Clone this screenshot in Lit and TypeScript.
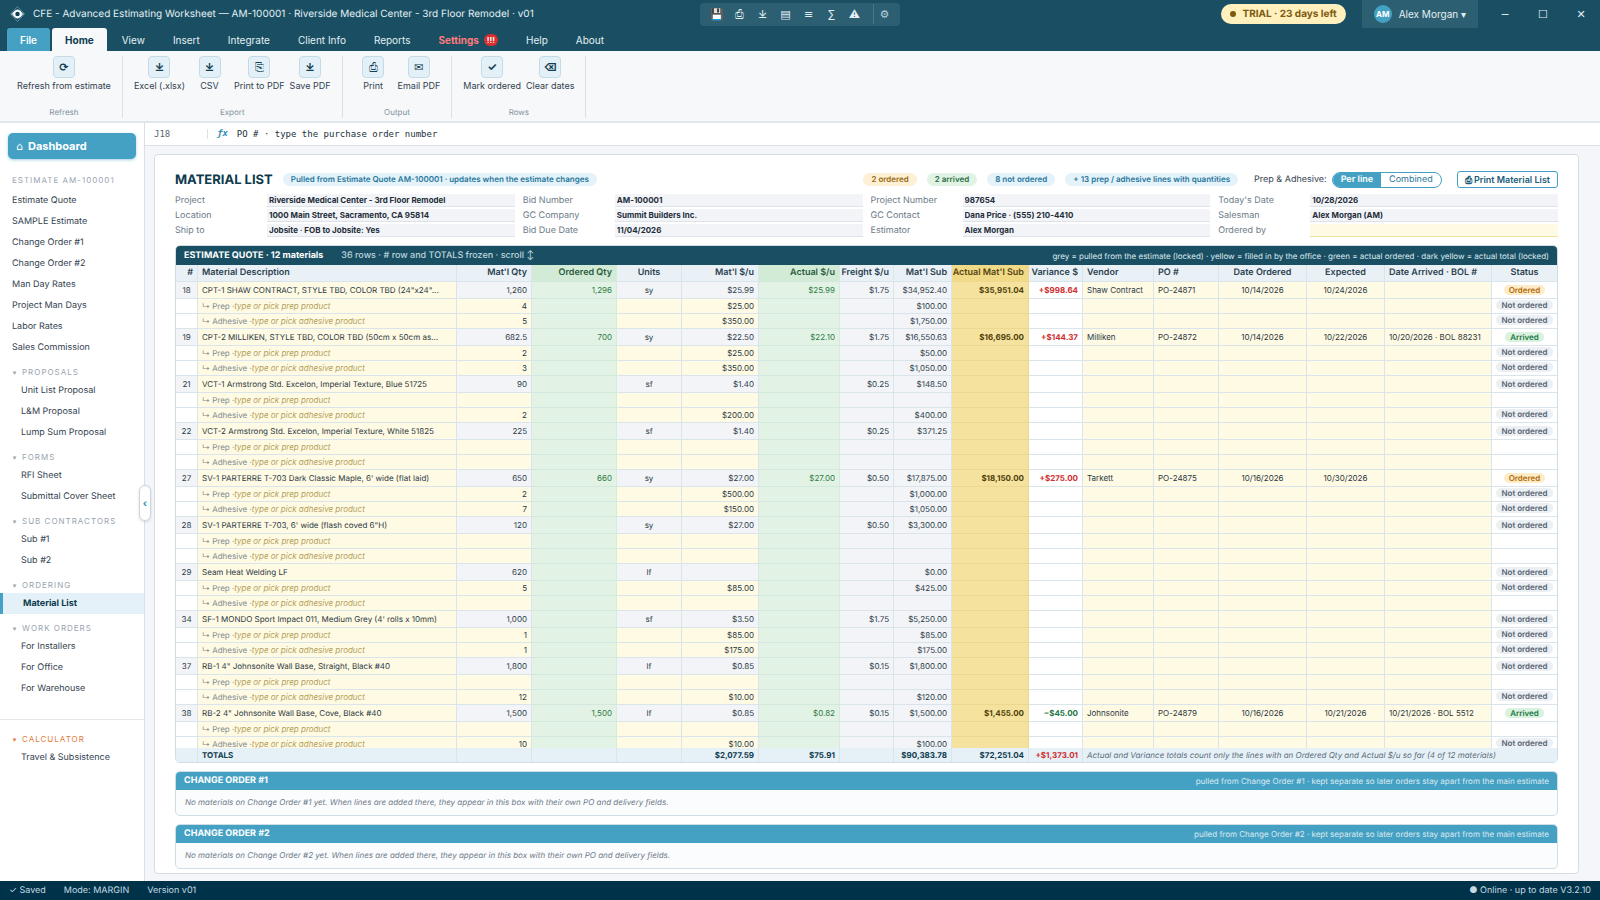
import { LitElement, html, css, nothing } from "lit";
import { customElement, state } from "lit/decorators.js";
import { classMap } from "lit/directives/class-map.js";

type Sub = { qty?: string; price?: string; total?: string };
type Material = {
  no: number;
  name: string;
  qty: string;
  unit: string;
  price?: string;
  freight?: string;
  total: string;
  ordered?: string;
  actual?: string;
  actualSub?: string;
  variance?: string;
  vendor?: string;
  po?: string;
  dateOrdered?: string;
  expected?: string;
  arrived?: string;
  status?: string;
  prep: Sub;
  adhesive: Sub;
};

const MATERIALS: Material[] = [
  { no: 18, name: 'CPT-1 SHAW CONTRACT, STYLE TBD, COLOR TBD (24"x24"...', qty: "1,260", unit: "sy", price: "$25.99", freight: "$1.75", total: "$34,952.40", ordered: "1,296", actual: "$25.99", actualSub: "$35,951.04", variance: "+$998.64", vendor: "Shaw Contract", po: "PO-24871", dateOrdered: "10/14/2026", expected: "10/24/2026", status: "Ordered", prep: { qty: "4", price: "$25.00", total: "$100.00" }, adhesive: { qty: "5", price: "$350.00", total: "$1,750.00" } },
  { no: 19, name: "CPT-2 MILLIKEN, STYLE TBD, COLOR TBD (50cm x 50cm as...", qty: "682.5", unit: "sy", price: "$22.50", freight: "$1.75", total: "$16,550.63", ordered: "700", actual: "$22.10", actualSub: "$16,695.00", variance: "+$144.37", vendor: "Milliken", po: "PO-24872", dateOrdered: "10/14/2026", expected: "10/22/2026", arrived: "10/20/2026 · BOL 88231", status: "Arrived", prep: { qty: "2", price: "$25.00", total: "$50.00" }, adhesive: { qty: "3", price: "$350.00", total: "$1,050.00" } },
  { no: 21, name: "VCT-1 Armstrong Std. Excelon, Imperial Texture, Blue 51725", qty: "90", unit: "sf", price: "$1.40", freight: "$0.25", total: "$148.50", prep: {}, adhesive: { qty: "2", price: "$200.00", total: "$400.00" } },
  { no: 22, name: "VCT-2 Armstrong Std. Excelon, Imperial Texture, White 51825", qty: "225", unit: "sf", price: "$1.40", freight: "$0.25", total: "$371.25", prep: {}, adhesive: {} },
  { no: 27, name: "SV-1 PARTERRE T-703 Dark Classic Maple, 6' wide (flat laid)", qty: "650", unit: "sy", price: "$27.00", freight: "$0.50", total: "$17,875.00", ordered: "660", actual: "$27.00", actualSub: "$18,150.00", variance: "+$275.00", vendor: "Tarkett", po: "PO-24875", dateOrdered: "10/16/2026", expected: "10/30/2026", status: "Ordered", prep: { qty: "2", price: "$500.00", total: "$1,000.00" }, adhesive: { qty: "7", price: "$150.00", total: "$1,050.00" } },
  { no: 28, name: "SV-1 PARTERRE T-703, 6' wide (flash coved 6\"H)", qty: "120", unit: "sy", price: "$27.00", freight: "$0.50", total: "$3,300.00", prep: {}, adhesive: {} },
  { no: 29, name: "Seam Heat Welding LF", qty: "620", unit: "lf", total: "$0.00", prep: { qty: "5", price: "$85.00", total: "$425.00" }, adhesive: {} },
  { no: 34, name: "SF-1 MONDO Sport Impact 011, Medium Grey (4' rolls x 10mm)", qty: "1,000", unit: "sf", price: "$3.50", freight: "$1.75", total: "$5,250.00", prep: { qty: "1", price: "$85.00", total: "$85.00" }, adhesive: { qty: "1", price: "$175.00", total: "$175.00" } },
  { no: 37, name: 'RB-1 4" Johnsonite Wall Base, Straight, Black #40', qty: "1,800", unit: "lf", price: "$0.85", freight: "$0.15", total: "$1,800.00", prep: {}, adhesive: { qty: "12", price: "$10.00", total: "$120.00" } },
  { no: 38, name: 'RB-2 4" Johnsonite Wall Base, Cove, Black #40', qty: "1,500", unit: "lf", price: "$0.85", freight: "$0.15", total: "$1,500.00", ordered: "1,500", actual: "$0.82", actualSub: "$1,455.00", variance: "−$45.00", vendor: "Johnsonite", po: "PO-24879", dateOrdered: "10/16/2026", expected: "10/21/2026", arrived: "10/21/2026 · BOL 5512", status: "Arrived", prep: {}, adhesive: { qty: "10", price: "$10.00", total: "$100.00" } },
];

const META: [string, string][] = [
  ["Project", "Riverside Medical Center - 3rd Floor Remodel"],
  ["Bid Number", "AM-100001"],
  ["Project Number", "987654"],
  ["Today's Date", "10/28/2026"],
  ["Location", "1000 Main Street, Sacramento, CA 95814"],
  ["GC Company", "Summit Builders Inc."],
  ["GC Contact", "Dana Price · (555) 210-4410"],
  ["Salesman", "Alex Morgan (AM)"],
  ["Ship to", "Jobsite · FOB to Jobsite: Yes"],
  ["Bid Due Date", "11/04/2026"],
  ["Estimator", "Alex Morgan"],
  ["Ordered by", ""],
];

const NAV: { title: string; items: string[] }[] = [
  { title: "Proposals", items: ["Unit List Proposal", "L&M Proposal", "Lump Sum Proposal"] },
  { title: "Forms", items: ["RFI Sheet", "Submittal Cover Sheet"] },
  { title: "Sub Contractors", items: ["Sub #1", "Sub #2"] },
  { title: "Ordering", items: ["Material List"] },
  { title: "Work Orders", items: ["For Installers", "For Office", "For Warehouse"] },
];

const RIBBON: { title: string; tools: [string, string][] }[] = [
  { title: "Refresh", tools: [["⟳", "Refresh from estimate"]] },
  { title: "Export", tools: [["⤓", "Excel (.xlsx)"], ["⤓", "CSV"], ["⎘", "Print to PDF"], ["⤓", "Save PDF"]] },
  { title: "Output", tools: [["⎙", "Print"], ["✉", "Email PDF"]] },
  { title: "Rows", tools: [["✓", "Mark ordered"], ["⌫", "Clear dates"]] },
];

@customElement("app-header")
export class AppHeader extends LitElement {
  static styles = css`
    :host { display: block; background: #1a4f63; color: #e3eff4; }
    button { font: inherit; color: inherit; border: 0; background: none; padding: 0; cursor: pointer; }
    .title { display: grid; grid-template-columns: 1fr auto 1fr; align-items: center; height: 28px; font-size: 10px; }
    .brand { display: flex; align-items: center; gap: 8px; padding-left: 10px; white-space: nowrap; }
    .logo { width: 15px; height: 16px; }
    .quick { display: flex; align-items: center; height: 23px; padding: 0 5px; border-radius: 4px; background: #2d5f72; font-size: 11px; }
    .quick button { width: 23px; height: 20px; line-height: 20px; }
    .quick .gear { width: 22px; margin-left: 7px; border-left: 1px solid #4a7586; color: #b9d0d9; }
    .right { display: flex; align-items: center; justify-content: flex-end; }
    .trial { display: flex; align-items: center; gap: 6px; height: 20px; padding: 0 9px; border-radius: 10px; background: #fff0bd; color: #7d5a10; font-weight: 700; margin-right: 16px; }
    .dot { width: 6px; height: 6px; border-radius: 50%; background: currentColor; }
    .user { display: flex; align-items: center; gap: 7px; height: 28px; padding: 0 12px; background: #2d5f72; margin-right: 8px; }
    .avatar { width: 18px; height: 18px; line-height: 18px; border-radius: 50%; background: #45a1c4; color: #fff; font-size: 8px; font-weight: 700; text-align: center; }
    .win { width: 38px; height: 28px; font-size: 11px; }
    .tabs { display: flex; gap: 2px; padding-left: 7px; height: 23px; font-size: 10px; }
    .tab { padding: 0 13px; border-radius: 3px 3px 0 0; display: flex; align-items: center; gap: 5px; }
    .file { background: #45a1c4; color: #fff; font-weight: 600; }
    .active { background: #f6f8fa; color: #0e3a4d; font-weight: 700; }
    .alert { color: #ff7b7b; font-weight: 700; }
    .badge { height: 12px; line-height: 12px; padding: 0 3px; border-radius: 6px; background: #d92f2f; color: #fff; font-size: 8px; }
  `;
  render() {
    const tabs = ["File", "Home", "View", "Insert", "Integrate", "Client Info", "Reports", "Settings", "Help", "About"];
    const quick: [string, string][] = [["💾", "Save"], ["⎙", "Print"], ["⤓", "Export"], ["▤", "Sheet"], ["≡", "List"], ["∑", "Totals"], ["⚠", "Warnings"]];
    return html`
      <div class="title">
        <div class="brand">
          <svg class="logo" viewBox="0 0 30 32" aria-hidden="true">
            <path d="M15 1 29 16 15 31 1 16Z" fill="none" stroke="#6f9aac" stroke-width="1.5" />
            <path d="M15 5 22 16 15 27 8 16Z" fill="#4d8fae" />
            <path d="M2 16 9 10V22ZM28 16 21 10V22Z" fill="#a9c7d6" />
            <circle cx="15" cy="16" r="6.5" fill="#0f3d50" stroke="#fff" stroke-width="4" />
          </svg>
          <span>CFE - Advanced Estimating Worksheet — AM-100001 · Riverside Medical Center - 3rd Floor Remodel · v01</span>
        </div>
        <div class="quick">
          ${quick.map(([g, l]) => html`<button aria-label=${l}>${g}</button>`)}
          <button class="gear" aria-label="Customize">⚙</button>
        </div>
        <div class="right">
          <span class="trial"><span class="dot"></span>TRIAL · 23 days left</span>
          <button class="user"><span class="avatar">AM</span>Alex Morgan ▾</button>
          <button class="win" aria-label="Minimize">─</button>
          <button class="win" aria-label="Maximize">☐</button>
          <button class="win" aria-label="Close">✕</button>
        </div>
      </div>
      <nav class="tabs">
        ${tabs.map(
          (t) => html`<button class=${classMap({ tab: true, file: t === "File", active: t === "Home", alert: t === "Settings" })}>
            ${t}${t === "Settings" ? html`<span class="badge">!!!</span>` : nothing}
          </button>`
        )}
      </nav>
    `;
  }
}

@customElement("app-ribbon")
export class AppRibbon extends LitElement {
  static styles = css`
    :host { display: flex; height: 70px; padding-left: 6px; background: #f6f8fa; border-bottom: 2px solid #e2e6ea; }
    .group { display: flex; flex-direction: column; justify-content: space-between; margin: 5px 0 3px; padding: 0 9px; border-right: 1px solid #dce1e6; }
    .tools { display: flex; gap: 1px; }
    .tool { display: flex; flex-direction: column; align-items: center; gap: 2px; min-width: 43px; padding: 0 2px; border: 0; background: none; font: inherit; font-size: 9px; line-height: 12px; color: #33424f; white-space: nowrap; }
    .icon { box-sizing: border-box; width: 22px; height: 22px; line-height: 20px; border: 1px solid #c3dbe7; border-radius: 4px; background: #e4f0f7; color: #123f52; font-size: 11px; font-weight: 700; }
    .thin { font-weight: 400; }
    .name { font-size: 8px; line-height: 12px; text-align: center; color: #8592a0; }
  `;
  render() {
    return RIBBON.map(
      (g) => html`<section class="group">
        <div class="tools">
          ${g.tools.map(
            ([icon, label]) => html`<button class="tool">
              <span class=${classMap({ icon: true, thin: icon === "⎘" || icon === "⎙" })} aria-hidden="true">${icon}</span>${label}
            </button>`
          )}
        </div>
        <div class="name">${g.title}</div>
      </section>`
    );
  }
}

@customElement("app-sidebar")
export class AppSidebar extends LitElement {
  static styles = css`
    :host { position: relative; box-sizing: border-box; display: flex; flex-direction: column; width: 145px; padding-top: 10px; background: #fff; border-right: 1px solid #d9e0e7; font-size: 9px; color: #33424f; }
    a { color: inherit; text-decoration: none; }
    .dash { display: flex; align-items: center; gap: 5px; height: 26px; margin: 0 8px 12px; padding: 0 8px; border: 0; border-radius: 5px; background: #45a1c4; color: #fff; font: inherit; font-size: 11px; font-weight: 700; box-shadow: 0 1px 3px #45a1c480; }
    .home { font-weight: 400; }
    .caption { padding: 0 12px; height: 19px; line-height: 19px; font-size: 8px; letter-spacing: 1px; text-transform: uppercase; color: #98a4b0; white-space: nowrap; }
    .item { display: block; height: 21px; line-height: 21px; padding-left: 12px; white-space: nowrap; }
    .sub { padding-left: 21px; }
    .current { padding-left: 20px; border-left: 3px solid #45a1c4; background: #e4f1f8; color: #0e3a4d; font-weight: 700; }
    .head { display: flex; align-items: center; gap: 5px; box-sizing: border-box; height: 22px; padding: 6px 0 0 12px; border: 0; background: none; font: inherit; font-size: 8px; letter-spacing: 1px; text-transform: uppercase; color: #98a4b0; }
    .tri { width: 5px; letter-spacing: 0; font-size: 7px; }
    .calc { margin-top: 20px; padding-top: 5px; border-top: 1px solid #e3e8ed; }
    .warm { color: #e07b39; }
    .fold { position: absolute; right: -7px; top: 362px; width: 12px; height: 36px; padding: 0; border: 1px solid #cdd6de; border-radius: 6px; background: #fff; color: #2f8fb3; font: inherit; font-size: 10px; font-weight: 700; box-shadow: 0 1px 3px #0002; z-index: 3; }
  `;
  render() {
    const main = ["Estimate Quote", "SAMPLE Estimate", "Change Order #1", "Change Order #2", "Man Day Rates", "Project Man Days", "Labor Rates", "Sales Commission"];
    return html`
      <button class="dash"><span class="home" aria-hidden="true">⌂</span>Dashboard</button>
      <div class="caption">Estimate AM-100001</div>
      ${main.map((m) => html`<a class="item" href="#">${m}</a>`)}
      ${NAV.map(
        (g) => html`<button class="head"><span class="tri">▾</span>${g.title}</button>
          ${g.items.map((i) => html`<a href="#" class=${classMap({ item: true, sub: true, current: i === "Material List" })}>${i}</a>`)}`
      )}
      <div class="calc">
        <button class="head warm"><span class="tri">▾</span>Calculator</button>
        <a class="item sub" href="#">Travel &amp; Subsistence</a>
      </div>
      <button class="fold" aria-label="Collapse sidebar">‹</button>
    `;
  }
}

@customElement("material-table")
export class MaterialTable extends LitElement {
  static styles = css`
    :host { display: block; overflow: auto; scrollbar-width: none; font-size: 8px; color: #2a3844; }
    table { width: 100%; min-width: 1300px; table-layout: fixed; border-collapse: separate; border-spacing: 0; }
    th, td { box-sizing: border-box; padding: 0 4px; border-right: 1px solid #dae4eb; border-bottom: 1px solid #dae4eb; overflow: hidden; white-space: nowrap; text-overflow: ellipsis; text-align: left; line-height: 12px; }
    th:last-child, td:last-child { border-right: 0; }
    thead th { position: sticky; top: 0; z-index: 1; height: 17px; background: #e9f1f6; font-size: 9px; font-weight: 600; color: #2c4150; }
    .main td { height: 17px; }
    .sub td { height: 15px; }
    .w-no { width: 22px; } .w-qty { width: 75px; } .w-ord { width: 85px; } .w-unit { width: 65px; } .w-price { width: 77px; }
    .w-act { width: 81px; } .w-fr { width: 54px; } .w-tot { width: 58px; } .w-asub { width: 77px; } .w-var { width: 54px; }
    .w-ven { width: 71px; } .w-po { width: 65px; } .w-date { width: 88px; } .w-exp { width: 78px; } .w-arr { width: 107px; } .w-st { width: 65px; }
    .r, .r input { text-align: right; }
    th.r, td.r { padding-left: 0; }
    .c, .c input { text-align: center; }
    .main .no, .grey { background: #f2f4f8; }
    td.c.no { padding: 0; }
    .yellow { background: #fffae3; }
    .green { background: #e2f3e5; color: #2d7a45; border-right-color: #d6ecdb; border-bottom-color: #d3e8dc; }
    .gold { background: #f6e29f; color: #4f3f08; font-weight: 700; border-color: #ecd88f; }
    thead .green { background: #d2ebd6; color: #2b5a40; }
    thead .gold { background: #f0d987; color: #574611; font-weight: 600; }
    .up { color: #cf2e2e; font-weight: 700; }
    .down { color: #22763f; font-weight: 700; }
    input { display: block; box-sizing: border-box; width: 100%; height: 12px; padding: 0; border: 0; background: none; font: inherit; color: inherit; outline-offset: -1px; }
    .line { display: flex; align-items: center; color: #808b90; }
    .line input { flex: 1; min-width: 0; font-style: italic; }
    .line input::placeholder { color: #b3a05a; opacity: 1; }
    .pill { display: inline-block; height: 10px; line-height: 10px; padding: 0 5px; border-radius: 5px; font-weight: 600; vertical-align: top; background: #eceff3; color: #566472; }
    .main .pill { margin-top: 1px; }
    td.c.st { padding: 0; }
    .ordered { background: #fdecc8; color: #b26b0b; }
    .arrived { background: #d9f2df; color: #22763f; }
    tfoot td { position: sticky; bottom: 0; height: 14px; background: #e6f1f7; font-weight: 700; color: #0e3a4d; border-bottom: 0; }
    tfoot .note { font-weight: 400; font-style: italic; color: #5b6b78; }
    tfoot .up { color: #cf2e2e; }
  `;

  private edit(kind: string, label: string, value = "") {
    return html`<td class=${kind}><input aria-label=${label} .value=${value} /></td>`;
  }

  private pill(status: string) {
    return html`<span class=${classMap({ pill: true, ordered: status === "Ordered", arrived: status === "Arrived" })}>${status}</span>`;
  }

  private sub(m: Material, kind: string, s: Sub) {
    const at = `${m.no} ${kind}`;
    return html`<tr class="sub">
      <td></td>
      <td class="yellow"><label class="line">↳ ${kind} ·<input placeholder="type or pick ${kind.toLowerCase()} product" /></label></td>
      ${this.edit("r yellow", `${at} quantity`, s.qty)}
      ${this.edit("r green", `${at} ordered quantity`)}
      ${this.edit("c yellow", `${at} units`)}
      ${this.edit("r yellow", `${at} unit price`, s.price)}
      ${this.edit("r green", `${at} actual unit price`)}
      <td class="r grey"></td>
      <td class="r grey">${s.total}</td>
      <td class="gold"></td>
      <td></td>
      ${this.edit("yellow", `${at} vendor`)}
      ${this.edit("yellow", `${at} PO`)}
      ${this.edit("c yellow", `${at} date ordered`)}
      ${this.edit("c yellow", `${at} expected`)}
      ${this.edit("yellow", `${at} date arrived`)}
      <td class="c st">${s.total ? this.pill("Not ordered") : nothing}</td>
    </tr>`;
  }

  private group(m: Material) {
    return html`<tr class="main">
        <td class="c no">${m.no}</td>
        <td class="yellow">${m.name}</td>
        <td class="r grey">${m.qty}</td>
        ${this.edit("r green", `${m.no} ordered quantity`, m.ordered)}
        <td class="c grey">${m.unit}</td>
        <td class="r grey">${m.price}</td>
        ${this.edit("r green", `${m.no} actual unit price`, m.actual)}
        <td class="r grey">${m.freight}</td>
        <td class="r grey">${m.total}</td>
        <td class="r gold">${m.actualSub}</td>
        <td class=${classMap({ r: true, up: !!m.variance?.startsWith("+"), down: !!m.variance?.startsWith("−") })}>${m.variance}</td>
        ${this.edit("yellow", `${m.no} vendor`, m.vendor)}
        ${this.edit("yellow", `${m.no} PO`, m.po)}
        ${this.edit("c yellow", `${m.no} date ordered`, m.dateOrdered)}
        ${this.edit("c yellow", `${m.no} expected`, m.expected)}
        ${this.edit("yellow", `${m.no} date arrived`, m.arrived)}
        <td class="c st">${this.pill(m.status ?? "Not ordered")}</td>
      </tr>
      ${this.sub(m, "Prep", m.prep)} ${this.sub(m, "Adhesive", m.adhesive)}`;
  }

  render() {
    return html`<table>
      <thead>
        <tr>
          <th class="w-no r">#</th>
          <th>Material Description</th>
          <th class="w-qty r">Mat'l Qty</th>
          <th class="w-ord r green">Ordered Qty</th>
          <th class="w-unit c">Units</th>
          <th class="w-price r">Mat'l $/u</th>
          <th class="w-act r green">Actual $/u</th>
          <th class="w-fr r">Freight $/u</th>
          <th class="w-tot r">Mat'l Sub</th>
          <th class="w-asub r gold">Actual Mat'l Sub</th>
          <th class="w-var r">Variance $</th>
          <th class="w-ven">Vendor</th>
          <th class="w-po">PO #</th>
          <th class="w-date c">Date Ordered</th>
          <th class="w-exp c">Expected</th>
          <th class="w-arr">Date Arrived · BOL #</th>
          <th class="w-st c">Status</th>
        </tr>
      </thead>
      <tbody>
        ${MATERIALS.map((m) => this.group(m))}
      </tbody>
      <tfoot>
        <tr>
          <td></td>
          <td>TOTALS</td>
          <td></td>
          <td></td>
          <td></td>
          <td class="r">$2,077.59</td>
          <td class="r">$75.91</td>
          <td></td>
          <td class="r">$90,383.78</td>
          <td class="r">$72,251.04</td>
          <td class="r up">+$1,373.01</td>
          <td class="note" colspan="6">Actual and Variance totals count only the lines with an Ordered Qty and Actual $/u so far (4 of 12 materials)</td>
        </tr>
      </tfoot>
    </table>`;
  }
}

@customElement("app-root")
export class AppRoot extends LitElement {
  @state() private mode = "Per line";

  static styles = css`
    :host { display: flex; flex-direction: column; height: 100vh; overflow: hidden; font-family: Inter, "DejaVu Sans", sans-serif; font-size: 9px; color: #33424f; background: #f4f6f9; text-rendering: geometricPrecision; }
    .body { flex: 1; min-height: 0; display: flex; }
    .work { flex: 1; min-width: 0; display: flex; flex-direction: column; }
    .formula { display: flex; align-items: center; gap: 9px; height: 22px; padding-left: 9px; background: #fff; border-bottom: 1px solid #d9e0e7; font-family: "DejaVu Sans Mono", monospace; }
    .formula input { border: 0; padding: 0; background: none; font: inherit; color: #22303c; }
    .formula .cell { width: 44px; color: #5b6875; }
    .fx { padding-left: 9px; border-left: 1px solid #dce1e6; color: #2f8fb3; font-weight: 700; font-style: italic; }
    .entry { flex: 1; }
    .sheet { flex: 1; min-height: 0; display: flex; flex-direction: column; margin: 8px 21px 7px 9px; padding: 16px 20px 4px; background: #fff; border: 1px solid #d5dde4; border-radius: 4px; }
    .top { display: flex; align-items: center; gap: 10px; height: 17px; margin-bottom: 6px; white-space: nowrap; }
    h1 { margin: 0; font-size: 13px; line-height: 16px; font-weight: 700; color: #0e3a4d; }
    .tag { height: 13px; line-height: 13px; padding: 0 8px; border-radius: 7px; background: #e4f2fa; color: #27769a; font-size: 8px; font-weight: 600; }
    .spread { margin-left: auto; }
    .amber { background: #fdf0d5; color: #9a6a12; }
    .mint { background: #e0f3e4; color: #2b6e44; }
    .switch { display: flex; align-items: center; gap: 5px; margin: 0 5px 0 6px; padding: 0; border: 0; }
    .pair { display: flex; box-sizing: border-box; height: 16px; border: 1px solid #45a1c4; border-radius: 8px; overflow: hidden; }
    .pair label { padding: 0 8px; line-height: 14px; color: #27769a; }
    .pair .on { background: #45a1c4; color: #fff; font-weight: 600; }
    .pair input { position: absolute; opacity: 0; width: 1px; height: 1px; margin: 0; }
    .print { height: 17px; padding: 0 7px; border: 1px solid #45a1c4; border-radius: 3px; background: #fff; color: #1a5c7a; font: inherit; font-weight: 600; }
    .meta { display: grid; grid-template-columns: repeat(4, 1fr); gap: 2px 8px; margin-bottom: 8px; }
    .field { display: flex; color: #6d7a87; line-height: 13px; }
    .field span { width: 92px; flex: none; }
    .field input { box-sizing: border-box; flex: 1; min-width: 0; height: 13px; padding: 0 2px; border: 0; border-bottom: 1px solid #dde3ea; background: #f2f4f8; color: #1f2d38; font: inherit; font-size: 8px; font-weight: 700; }
    .field .open { background: #fffae3; border-bottom: 1px solid #f1e2a0; }
    .panel { flex: none; margin-bottom: 8px; border: 1px solid #cfdde5; border-radius: 5px; overflow: hidden; background: #fbfcfe; }
    .panel:last-child { margin-bottom: 0; }
    .grow { flex: 1 1 0; min-height: 0; display: flex; flex-direction: column; background: #fff; }
    .bar { display: flex; align-items: center; gap: 18px; height: 18px; padding: 0 8px; background: #45a1c4; color: #fff; white-space: nowrap; }
    .dark { height: 19px; background: #1a4f63; }
    h2 { margin: 0; font-size: 9px; line-height: 14px; font-weight: 700; }
    .hint { font-weight: 500; color: #bcd5de; }
    .legend { margin-left: auto; font-size: 8px; color: #dceaf1; }
    .rows { flex: 1; min-height: 0; }
    .empty { margin: 0; padding: 0 9px; line-height: 25px; font-size: 8px; font-style: italic; color: #6d7a87; }
    .foot { display: flex; align-items: center; gap: 18px; height: 19px; padding: 0 9px; background: #003349; color: #c5dae3; }
    .net { margin-left: auto; }
  `;

  private change(n: number) {
    return html`<section class="panel">
      <div class="bar">
        <h2>CHANGE ORDER #${n}</h2>
        <span class="legend">pulled from Change Order #${n} · kept separate so later orders stay apart from the main estimate</span>
      </div>
      <p class="empty">No materials on Change Order #${n} yet. When lines are added there, they appear in this box with their own PO and delivery fields.</p>
    </section>`;
  }

  render() {
    return html`
      <app-header></app-header>
      <app-ribbon></app-ribbon>
      <div class="body">
        <app-sidebar></app-sidebar>
        <main class="work">
          <div class="formula">
            <input class="cell" aria-label="Cell" value="J18" />
            <span class="fx">ƒx</span>
            <input class="entry" aria-label="Formula" value="PO # · type the purchase order number" />
          </div>
          <div class="sheet">
            <div class="top">
              <h1>MATERIAL LIST</h1>
              <span class="tag">Pulled from Estimate Quote AM-100001 · updates when the estimate changes</span>
              <span class="tag amber spread">2 ordered</span>
              <span class="tag mint">2 arrived</span>
              <span class="tag">8 not ordered</span>
              <span class="tag">+ 13 prep / adhesive lines with quantities</span>
              <div class="switch" role="radiogroup" aria-label="Prep and adhesive">
                <span>Prep &amp; Adhesive:</span>
                <div class="pair">
                  ${["Per line", "Combined"].map(
                    (o) => html`<label class=${classMap({ on: this.mode === o })}
                      ><input type="radio" name="mode" .checked=${this.mode === o} @change=${() => (this.mode = o)} />${o}</label
                    >`
                  )}
                </div>
              </div>
              <button class="print">⎙ Print Material List</button>
            </div>
            <div class="meta">
              ${META.map(([l, v]) => html`<label class="field"><span>${l}</span><input class=${classMap({ open: !v })} .value=${v} ?readonly=${!!v} /></label>`)}
            </div>
            <section class="panel grow">
              <div class="bar dark">
                <h2>ESTIMATE QUOTE · 12 materials</h2>
                <span class="hint">36 rows · # row and TOTALS frozen · scroll ↕</span>
                <span class="legend">grey = pulled from the estimate (locked) · yellow = filled in by the office · green = actual ordered · dark yellow = actual total (locked)</span>
              </div>
              <material-table class="rows"></material-table>
            </section>
            ${this.change(1)} ${this.change(2)}
          </div>
        </main>
      </div>
      <footer class="foot">
        <span>✓ Saved</span><span>Mode: MARGIN</span><span>Version v01</span>
        <span class="net">● Online · up to date V3.2.10</span>
      </footer>
    `;
  }
}
